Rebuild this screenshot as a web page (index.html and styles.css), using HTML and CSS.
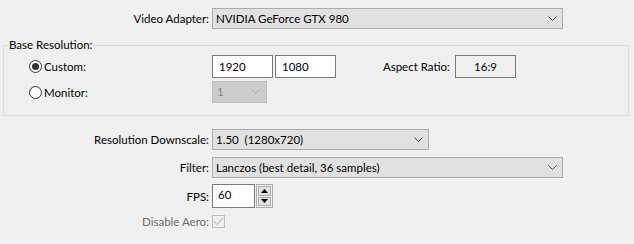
FILE: index.html
```html
<!DOCTYPE html>
<html>
<head>
<meta charset="utf-8">
<link rel="stylesheet" href="styles.css">
</head>
<body>
<div class="dlg">
  <div class="row r-adapter">
    <div class="lbl">Video Adapter:</div>
    <div class="combo w-wide">
      <span class="ctext">NVIDIA GeForce GTX 980</span>
      <svg class="chev" width="9" height="6" viewBox="0 0 9 6"><path d="M0.5 0.5 L4.5 4.5 L8.5 0.5" fill="none" stroke="#444" stroke-width="1"/></svg>
    </div>
  </div>

  <fieldset class="group">
    <legend>Base Resolution:</legend>
    <div class="grow r-custom">
      <div class="radio-cell">
        <span class="radio checked"><span class="dot"></span></span>
        <span class="rlbl">Custom:</span>
      </div>
      <div class="edit w-res">1920</div>
      <div class="edit w-res">1080</div>
      <div class="lbl-ar">Aspect Ratio:</div>
      <div class="ar-box">16:9</div>
    </div>
    <div class="grow r-monitor">
      <div class="radio-cell">
        <span class="radio"></span>
        <span class="rlbl">Monitor:</span>
      </div>
      <div class="combo disabled w-mon">
        <span class="ctext">1</span>
        <svg class="chev" width="9" height="6" viewBox="0 0 9 6"><path d="M0.5 0.5 L4.5 4.5 L8.5 0.5" fill="none" stroke="#a8a8a8" stroke-width="1"/></svg>
      </div>
    </div>
  </fieldset>

  <div class="row r-down">
    <div class="lbl">Resolution Downscale:</div>
    <div class="combo w-mid">
      <span class="ctext">1.50&nbsp; (1280x720)</span>
      <svg class="chev" width="9" height="6" viewBox="0 0 9 6"><path d="M0.5 0.5 L4.5 4.5 L8.5 0.5" fill="none" stroke="#444" stroke-width="1"/></svg>
    </div>
  </div>
  <div class="row r-filter">
    <div class="lbl">Filter:</div>
    <div class="combo w-wide">
      <span class="ctext">Lanczos (best detail, 36 samples)</span>
      <svg class="chev" width="9" height="6" viewBox="0 0 9 6"><path d="M0.5 0.5 L4.5 4.5 L8.5 0.5" fill="none" stroke="#444" stroke-width="1"/></svg>
    </div>
  </div>
  <div class="row r-fps">
    <div class="lbl">FPS:</div>
    <div class="edit fps">60</div>
    <div class="spin">
      <div class="sbtn"><svg width="7" height="4" viewBox="0 0 7 4"><path d="M3.5 0 L7 4 L0 4 Z" fill="#000"/></svg></div>
      <div class="sbtn"><svg width="7" height="4" viewBox="0 0 7 4"><path d="M0 0 L7 0 L3.5 4 Z" fill="#000"/></svg></div>
    </div>
  </div>
  <div class="row r-aero">
    <div class="lbl dim">Disable Aero:</div>
    <span class="check">
      <svg width="11" height="9" viewBox="0 0 11 9"><path d="M1 4.5 L4 7.5 L10 1" fill="none" stroke="#c4c4c4" stroke-width="1.2"/></svg>
    </span>
  </div>
</div>
</body>
</html>
```

FILE: styles.css
```css
html, body {
  margin: 0;
  padding: 0;
  background: #f0f0f0;
}
body {
  font-family: Lato, "Noto Sans", sans-serif;
  font-size: 11.5px;
  color: #000;
  width: 634px;
  height: 244px;
  overflow: hidden;
}
.dlg {
  padding-top: 8px;
}
.row {
  display: flex;
  align-items: center;
}
.lbl {
  text-align: right;
  padding-right: 3px;
  box-sizing: border-box;
  width: 212px;
  white-space: nowrap;
}
.lbl.dim { color: #6d6d6d; }
.combo {
  box-sizing: border-box;
  height: 21px;
  background: #e1e1e1;
  border: 1px solid #adadad;
  display: flex;
  align-items: center;
  justify-content: space-between;
  padding: 0 4px 0 3px;
}
.combo .ctext { line-height: 1; }
.combo .chev { margin-right: 1px; }
.combo.disabled {
  background: #cccccc;
  border-color: #bfbfbf;
  color: #838383;
  height: 22px;
  padding-left: 4px;
  padding-right: 5px;
}
.w-wide { width: 351px; }
.w-mid { width: 217px; }
.w-mon { width: 55px; }

.group {
  box-sizing: border-box;
  margin: 9px 0 0 3px;
  width: 626px;
  height: 78px;
  border: 1px solid #dcdcdc;
  padding: 0;
}
.group legend {
  padding: 0 1px;
  margin-left: 4px;
  line-height: 14px;
}
.grow {
  display: flex;
  align-items: center;
}
.r-custom { margin-top: 3px; }
.r-monitor { margin-top: 3px; }
.radio-cell {
  width: 208px;
  display: flex;
  align-items: center;
  padding-left: 25px;
  box-sizing: border-box;
}
.radio {
  box-sizing: border-box;
  width: 13px;
  height: 13px;
  border-radius: 50%;
  border: 1px solid #333;
  background: #fff;
  display: flex;
  align-items: center;
  justify-content: center;
  margin-right: 2px;
}
.radio .dot {
  width: 7px;
  height: 7px;
  border-radius: 50%;
  background: #333;
}
.edit {
  box-sizing: border-box;
  height: 23px;
  background: #fff;
  border: 1px solid #7a7a7a;
  padding-left: 6px;
  display: flex;
  align-items: center;
}
.w-res { width: 61px; margin-right: 2px; }
.lbl-ar {
  width: 117px;
  text-align: right;
  padding-right: 5px;
  box-sizing: border-box;
}
.ar-box {
  box-sizing: border-box;
  width: 61px;
  height: 23px;
  border: 1px solid #7a7a7a;
  display: flex;
  align-items: center;
  justify-content: center;
}

.r-down { margin-top: 13px; }
.r-filter { margin-top: 7px; }
.r-fps { margin-top: 6px; }
.edit.fps {
  width: 43px;
  height: 24px;
  padding-left: 5px;
  align-items: flex-start;
  padding-top: 3px;
}
.spin {
  display: flex;
  flex-direction: column;
  height: 24px;
  width: 17px;
  margin-left: 1px;
  gap: 1px;
  border: 1px solid #ababab;
  box-sizing: border-box;
  padding: 1px;
}
.sbtn {
  flex: 1;
  background: #e1e1e1;
  border: 1px solid #adadad;
  display: flex;
  align-items: center;
  justify-content: center;
}
.r-aero { margin-top: 7px; }
.check {
  box-sizing: border-box;
  width: 13px;
  height: 13px;
  border: 1px solid #bcbcbc;
  background: #f0f0f0;
  display: flex;
  align-items: center;
  justify-content: center;
}
```
